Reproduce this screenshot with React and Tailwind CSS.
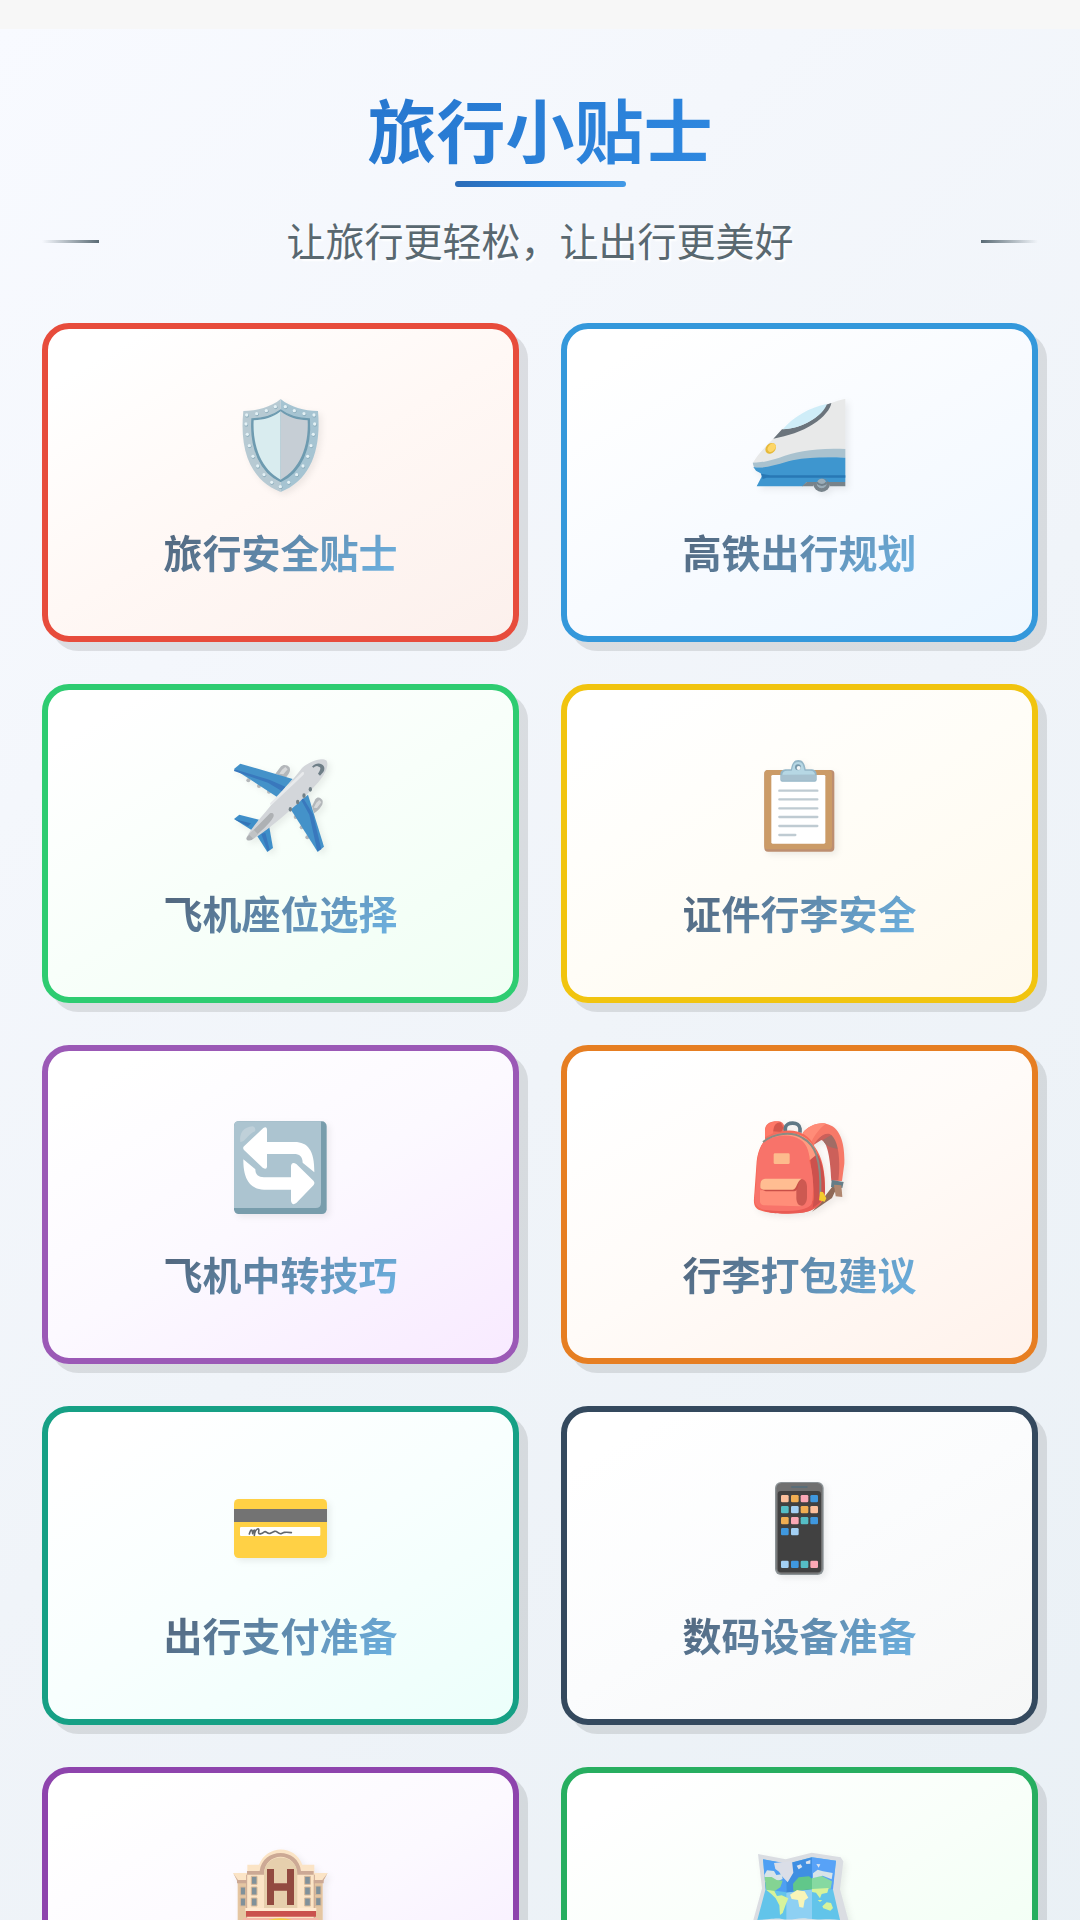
const SANS = 'font-["Noto_Sans_CJK_SC","Noto_Sans",sans-serif]';

function Icon({ box, children }) {
  return (
    <svg
      viewBox={box}
      aria-hidden="true"
      className="h-[130px] w-[120px] overflow-visible [filter:drop-shadow(3px_3px_3px_rgba(0,0,0,0.07))]"
    >
      {children}
    </svg>
  );
}

const RIVETS = [
  [80, 105], [110, 101], [139, 92], [166, 80], [196, 80], [223, 92], [252, 101], [282, 105],
  [78, 132], [82, 163], [88, 197], [99, 229], [113, 258], [132, 284], [155, 307], [181, 320],
  [206, 307], [230, 284], [249, 258], [263, 229], [273, 197], [280, 163], [284, 132],
];

function ShieldIcon() {
  return (
    <Icon box="3 0 360 390">
      <path d="M182 57C152 82 112 92 70 93C58 210 90 300 182 336Z" fill="#b7cad3" />
      <path d="M182 57C212 82 252 92 294 93C304 210 272 300 182 336Z" fill="#a6c4d2" />
      <path d="M182 90C158 108 130 116 96 117C90 205 122 278 182 304C242 278 274 205 268 117C234 116 206 108 182 90Z" fill="#6e9bb0" stroke="#6e9bb0" strokeWidth="4" />
      <path d="M182 94C158 113 132 120 101 121C97 200 126 270 182 299Z" fill="#d9ecef" />
      <path d="M182 94C206 113 232 120 263 121C267 200 238 270 182 299Z" fill="#c6ced5" />
      {RIVETS.map(([x, y]) => (
        <g key={x + "-" + y}>
          <circle cx={x + 1} cy={y + 2} r="5.5" fill="#87a9b8" />
          <circle cx={x} cy={y} r="5" fill="#e4f1f5" />
        </g>
      ))}
    </Icon>
  );
}

function TrainIcon() {
  return (
    <Icon box="32 0 360 390">
      <circle cx="277" cy="311" r="25" fill="#77838b" />
      <circle cx="277" cy="310" r="15" fill="#9badb8" />
      <path d="M348 56C290 70 210 105 160 150C128 180 95 210 72 246C68 258 80 272 98 278L348 292Z" fill="#e8e9e9" />
      <path d="M348 207C260 203 200 214 150 233C116 244 90 248 70 248L74 262C90 266 130 262 160 252C210 237 270 230 348 233Z" fill="#a9c2cf" />
      <path d="M72 261C112 268 150 250 190 241C240 231 290 231 348 233V306H232L220 319H82L96 292C102 280 88 277 80 272Z" fill="#3e96cf" />
      <path d="M95 281L122 286H348V293H112L100 297Z" fill="#2878b5" />
      <path d="M232 306H258C270 292 287 292 298 306H348V319H302C298 305 288 296 277 296C264 296 255 307 252 319H218Z" fill="#77838b" />
      <circle cx="277" cy="310" r="14" fill="#9badb8" />
      <path d="M262 307C272 318 284 318 292 307" fill="none" stroke="#70818c" strokeWidth="6" />
      <path d="M306 69C304 86 284 112 252 132C216 155 176 168 132 176L158 148C220 145 274 111 290 74Z" fill="#6b747c" />
      <path d="M293 72C240 82 190 112 160 148C220 145 280 108 293 72Z" fill="#cfedf8" />
      <ellipse cx="124" cy="205" rx="18" ry="14" transform="rotate(-48 124 205)" fill="#e6b93a" />
      <ellipse cx="127" cy="203" rx="14" ry="10" transform="rotate(-48 127 203)" fill="#fdd667" />
    </Icon>
  );
}

function PlaneIcon() {
  return (
    <Icon box="3 3 360 390">
      <g fill="#b3b7ba">
        <path d="M166 101L182 80C190 72 202 74 208 82C214 92 206 104 196 114Z" />
        <path d="M276 199L286 178C292 168 304 172 308 182C310 196 298 208 282 220Z" />
        <circle cx="85" cy="121" r="6" /><circle cx="117" cy="138" r="6" /><circle cx="147" cy="155" r="6" />
        <circle cx="227" cy="231" r="6" /><circle cx="245" cy="262" r="6" /><circle cx="262" cy="292" r="6" />
      </g>
      <path d="M186 89L196 81L203 88L190 103L178 101ZM289 188L298 180L304 187L291 204L281 203Z" fill="#d7d9da" />
      <path d="M42 87L61 71L218 117L170 170Z" fill="#4492c9" />
      <path d="M43 88L148 119L196 140L185 153L144 128L42 93Z" fill="#3978bd" />
      <path d="M212 208L264 164L312 320L293 336Z" fill="#4492c9" />
      <path d="M233 190L244 181L268 224L292 334L304 328L279 223L249 173Z" fill="#3978bd" />
      <path d="M42 237L58 224L117 239L98 272Z" fill="#3f8fc9" />
      <path d="M111 287L148 262L159 324L142 336Z" fill="#3f8fc9" />
      <path d="M43 238L93 250L84 259Z" fill="#3474b7" />
      <path d="M124 282L136 278L149 329L143 334Z" fill="#3978bd" />
      <path d="M81 291C95 258 170 180 246 84C270 64 303 51 320 62C328 78 313 107 295 127C230 200 137 276 95 300C84 303 76 298 81 291Z" fill="#d3d6da" />
      <path d="M153 187L246 97C253 94 254 100 250 105L157 193C149 196 147 193 153 187Z" fill="#e8eaec" />
      <path d="M81 291L103 268L150 220C158 216 164 223 160 231C149 252 119 276 95 300C82 304 76 299 81 291Z" fill="#aeb1b4" />
      <path d="M101 269L114 283L100 296L86 283Z" fill="#c0c3c5" />
      <path d="M276 80C294 59 323 75 310 96L300 107L294 101C302 88 304 82 296 80C290 76 285 80 281 83Z" fill="#6e7e87" />
      <g fill="#718087"><ellipse cx="211" cy="208" rx="5" ry="7" /><ellipse cx="233" cy="186" rx="5" ry="7" /><ellipse cx="252" cy="167" rx="5" ry="7" /><ellipse cx="271" cy="148" rx="5" ry="7" /></g>
    </Icon>
  );
}

function ClipboardIcon() {
  return (
    <Icon box="2 3 360 390">
      <rect x="75" y="90" width="210" height="245" rx="11" fill="#bd8e70" />
      <rect x="75" y="90" width="203" height="238" rx="11" fill="#cb9b67" />
      <rect x="96" y="105" width="162" height="206" rx="4" fill="#fff" />
      <path d="M123 103C123 94 129 89 138 88H155C158 70 164 60 177 60C190 60 196 70 199 88H218C227 89 232 95 232 103V119Q232 125 226 125H129Q123 125 123 119Z" fill="#94b6c7" />
      <path d="M129 105C129 96 134 92 144 92H157C162 80 160 66 177 66C193 66 191 80 196 92H213C222 92 227 97 227 104Z" fill="#b6d7e4" />
      <rect x="125" y="104" width="105" height="18" rx="4" fill="#a7c1cf" />
      <circle cx="176" cy="82" r="9" fill="#7798aa" />
      <circle cx="178" cy="84" r="6" fill="#f4f7f8" />
      <path d="M120 152H234M120 178H234M120 205H234M120 231H234M120 258H234M120 285H168" stroke="#bfcbd2" strokeWidth="7" strokeLinecap="round" />
    </Icon>
  );
}

function TransferIcon() {
  return (
    <Icon box="3 6 360 390">
      <rect x="42" y="64" width="278" height="278" rx="14" fill="#789dac" />
      <path d="M55 64H303V308Q303 324 287 324H42V77Q42 64 55 64Z" fill="#acc4d0" />
      <path d="M61 126C57 98 72 81 98 79Q109 83 105 94C82 103 76 127 61 126Z" fill="#bfd0d9" />
      <path d="M72 139L130 84Q141 78 141 91V126H224C263 126 284 151 283 217L248 188C248 169 238 162 222 162H141V200Q140 211 128 203L72 150Q67 144 72 139Z" fill="#fff" />
      <path d="M70 178L106 208C106 224 115 232 132 232H213V198Q215 184 229 192L281 243Q286 249 281 255L229 309Q216 318 213 303V269H132C91 269 69 237 70 178Z" fill="#fff" />
    </Icon>
  );
}

function BackpackIcon() {
  return (
    <Icon box="2 6 360 390">
      <path d="M77 119V88C79 65 104 61 124 65C137 70 138 88 130 95Z" fill="#ef7060" />
      <path d="M101 94C98 73 110 67 124 67L132 83L126 96Z" fill="#d6574c" />
      <path d="M77 91C80 66 111 62 124 66C105 69 103 80 101 100L77 112Z" fill="#ff7867" />
      <path d="M138 95V84C140 64 181 64 182 86V98" fill="none" stroke="#607986" strokeWidth="11" />
      <path d="M219 137C238 105 266 90 282 96C302 122 306 190 303 242L276 242C274 178 264 123 246 120Z" fill="#cc605a" />
      <path d="M250 120C260 115 276 104 285 103C296 116 301 133 300 148C281 142 263 145 250 120Z" fill="#a16c65" />
      <path d="M190 99C206 78 235 66 260 71C305 80 317 134 315 191L308 243H297C306 159 292 112 271 102C249 97 232 120 219 141L191 111Z" fill="#f77968" />
      <path d="M190 99C206 78 235 66 260 71C238 86 221 112 212 135Z" fill="#ff8c78" />
      <path d="M236 316L281 257L291 266L278 294L218 335Z" fill="#8f6957" />
      <path d="M277 240L313 246L309 264L275 261Z" fill="#657d87" />
      <path d="M284 254L306 256L309 291L289 289Z" fill="#b0866f" />
      <path d="M44 296L52 184C58 135 79 106 122 95C165 84 207 98 226 140C244 165 258 199 257 270C260 308 226 336 181 339C135 342 87 341 62 331C49 326 42 315 44 296Z" fill="#f66857" />
      <path d="M45 291L59 294C96 344 168 335 220 303L247 278C254 313 225 335 181 339C134 343 45 348 45 291Z" fill="#e95b54" />
      <path d="M210 157L233 161C244 175 257 213 257 270C257 293 246 308 220 323C229 280 218 229 210 157Z" fill="#cc514d" />
      <path d="M54 183C58 151 69 123 91 109C126 91 177 94 201 123C210 138 210 158 209 180C224 225 224 277 217 312C203 337 122 336 71 329C47 321 42 303 47 280C53 254 50 220 54 183Z" fill="#f8736a" />
      <path d="M70 126C107 95 161 91 194 111C213 122 230 145 233 163L211 181C210 150 199 128 183 119C150 99 107 104 70 126Z" fill="#ff9b80" />
      <path d="M71 126C104 99 159 93 190 114C226 133 246 173 243 284" fill="none" stroke="#8a8b83" strokeWidth="6" />
      <rect x="103" y="160" width="48" height="32" rx="4" fill="#fdbb8d" />
      <path d="M62 271H178C209 272 207 315 183 319L72 316Q62 313 62 304Z" fill="#ff8e79" />
      <path d="M171 265C171 231 201 229 203 260V291C203 324 172 327 171 295Z" fill="#cd5951" />
      <path d="M66 268Q59 256 66 243Q70 237 84 237H188C175 242 178 273 165 274H79Z" fill="#c95048" />
      <path d="M63 263C61 239 70 236 82 236H187C172 243 173 268 160 269H74Q67 270 63 263Z" fill="#ffbd92" />
      <path d="M242 275L251 276L261 295L256 305L239 301Z" fill="#f3cb2f" />
    </Icon>
  );
}

function CardIcon() {
  return (
    <Icon box="3 -21 360 390">
      <rect x="42" y="87" width="279" height="177" rx="14" fill="#ffd145" />
      <path d="M42 117H321V156H42Z" fill="#737373" />
      <rect x="60" y="171" width="241" height="27" rx="3" fill="#fff" />
      <path d="M88 192C92 177 97 176 98 191C102 176 106 177 103 196C105 175 120 171 116 185C114 196 125 192 134 185C140 183 142 195 153 189L164 184C172 182 174 193 183 191L193 187Q203 186 214 188" fill="none" stroke="#61666c" strokeWidth="5" strokeLinecap="round" strokeLinejoin="round" />
    </Icon>
  );
}

const APPS = [
  [123, 90, "#fcc09d"], [153, 90, "#f1ae52"], [182, 90, "#fba8b5"], [211, 90, "#3f98df"],
  [123, 123, "#55bdc5"], [153, 123, "#a3d0f4"], [182, 123, "#f1ae52"], [211, 123, "#fcc09d"],
  [123, 156, "#f1ae52"], [153, 156, "#fba8b5"], [182, 156, "#55bdc5"], [211, 156, "#3f98df"],
  [123, 189, "#3f98df"], [153, 189, "#a3d0f4"],
  [123, 287, "#a3d0f4"], [153, 287, "#3f98df"], [182, 287, "#55bdc5"], [211, 287, "#fba8b5"],
];

function PhoneIcon() {
  return (
    <Icon box="0 -6 360 390">
      <rect x="105" y="51" width="146" height="279" rx="18" fill="#8b9295" />
      <rect x="109" y="54" width="138" height="272" rx="16" fill="#707070" />
      <rect x="113" y="78" width="130" height="244" rx="10" fill="#414141" />
      <rect x="153" y="63" width="50" height="6" rx="3" fill="#596d78" />
      {APPS.map(([x, y, fill]) => (
        <rect key={x + "-" + y} x={x} y={y} width="23" height="22" rx="4" fill={fill} />
      ))}
    </Icon>
  );
}

function HotelIcon() {
  return (
    <Icon box="3 12 360 390">
      <path d="M39 159L54 181V344H307V181L323 159H283V134H247C225 73 141 73 117 134H82V159Z" fill="#fbe4c6" />
      <path d="M40 159L53 181V344H80V189H54ZM323 159L308 181V344H281V189H307Z" fill="#e5c6a2" />
      <path d="M39 159L54 180H80V190H51V179ZM323 159L307 180H281V190H311V179ZM81 153H119C128 81 235 81 243 153H281V164H231C231 92 133 92 132 164H81Z" fill="#cca995" />
      <path d="M132 264V160C134 97 230 97 232 160V264Z" fill="#e6cfad" />
      <path d="M80 164V344M283 164V344" stroke="#cca995" strokeWidth="3" />
      <path d="M141 147H162V190H201V147H222V255H201V212H162V255H141Z" fill="#924a40" />
      <g fill="#80919a" stroke="#d9b999" strokeWidth="3">
        <path d="M94 169H111V193H94ZM94 201H111V225H94ZM94 234H111V258H94ZM254 169H271V193H254ZM254 201H271V225H254ZM254 234H271V258H254ZM61 201H77V225H61ZM61 234H77V258H61ZM287 198H303V224H287ZM287 233H303V257H287Z" />
      </g>
      <path d="M76 264H289V273H76Z" fill="#ffe9d0" />
      <path d="M78 273H288V290H78Z" fill="#ca514d" />
      <path d="M70 294H295V344H70Z" fill="#f5b8a9" />
      <path d="M145 300Q181 290 217 300Z" fill="#f5cf43" />
    </Icon>
  );
}

function MapIcon() {
  return (
    <Icon box="0 12 360 390">
      <path d="M54 102L137 118L215 98L302 112L310 124L300 208L326 304V350H40V300L66 205Z" fill="#dadde2" />
      <path d="M69 118L141 132L215 112L288 122L278 205L300 300V340H52V300L77 206Z" fill="#62c4ea" />
      <path d="M69 118L137 130L139 217L77 208Z" fill="#4e9ff3" />
      <path d="M138 132L216 112V208L139 218Z" fill="#3f8fe2" />
      <path d="M216 112L288 122L279 208L216 207Z" fill="#58a2f7" />
      <path d="M139 218L216 208V340H139Z" fill="#8ed0f3" />
      <path d="M102 129L156 123L160 158L143 187L126 169L117 155L106 147Z" fill="#dadee7" />
      <path d="M73 165L81 151L102 153L109 165L125 163L128 177L112 184L75 186Z" fill="#d7e4e8" />
      <path d="M74 171L95 171L110 180L128 182L121 202L94 220L78 207Z" fill="#84d493" />
      <path d="M160 213L159 191L176 172L207 169L216 176V208Z" fill="#61c78a" />
      <path d="M216 174L244 167L276 184L272 206L216 209Z" fill="#86d9a1" />
      <path d="M219 174V160L233 149L249 154L278 159L275 178L248 167Z" fill="#d8e4e8" />
      <path d="M170 137L182 133L187 141L176 148ZM197 125L211 120V131L199 132ZM229 132L241 133L236 143Z" fill="#dbe4ee" />
      <path d="M78 209L103 213L111 228L125 226L145 235L137 254L128 279L120 285L118 256L107 235L94 222Z" fill="#d7f39b" />
      <path d="M150 224L171 210L194 214L205 233L194 241L190 263L178 261L174 240L155 237Z" fill="#f8f5b8" />
      <path d="M216 207L266 204L262 218L245 222L240 235L228 218L216 216ZM247 259L260 247L273 249L279 264L271 272L250 265ZM233 240L247 240L240 246Z" fill="#d7f39b" />
      <path d="M52 300C95 298 107 293 126 297C157 303 176 290 204 296C244 301 270 295 299 300V307H52Z" fill="#d9e3e9" />
    </Icon>
  );
}

const CARDS = [
  { title: "旅行安全贴士", Art: ShieldIcon, tone: "border-[#e74c3c] from-white via-[#fff8f5] to-[#fcf0ec]" },
  { title: "高铁出行规划", Art: TrainIcon, tone: "border-[#3498db] from-white via-[#f8fbff] to-[#eff7ff]" },
  { title: "飞机座位选择", Art: PlaneIcon, tone: "border-[#2ecc71] from-white via-[#f8fffa] to-[#f0fff4]" },
  { title: "证件行李安全", Art: ClipboardIcon, tone: "border-[#f1c40f] from-white via-[#fffdf7] to-[#fff9ec]" },
  { title: "飞机中转技巧", Art: TransferIcon, tone: "border-[#9b59b6] from-white via-[#fcf9ff] to-[#f8eaff]" },
  { title: "行李打包建议", Art: BackpackIcon, tone: "border-[#e67e22] from-white via-[#fffbf8] to-[#fff2eb]" },
  { title: "出行支付准备", Art: CardIcon, tone: "border-[#16a085] from-white via-[#f8fffe] to-[#ecfffb]" },
  { title: "数码设备准备", Art: PhoneIcon, tone: "border-[#34495e] from-white via-[#fbfcfd] to-[#f6f7f7]" },
  { Art: HotelIcon, tone: "border-[#8e44ad] from-white via-[#fcf9ff] to-[#f5e9ff]" },
  { Art: MapIcon, tone: "border-[#27ae60] from-white via-[#f8fff9] to-[#edfff1]" },
];

function TipCard({ title, Art, tone }) {
  return (
    <a
      href="#"
      className={
        "flex min-h-[319px] flex-col items-center rounded-[27px] border-6 bg-linear-150 from-10% pt-[51px] shadow-[9px_9px_0_rgba(0,0,0,0.1)] " + tone
      }
    >
      <Art />
      {title && (
        <h2 className="mt-[17px] bg-linear-135 from-[#51647a] to-[#6db3e3] bg-clip-text text-[39px] leading-12 font-bold text-transparent">
          {title}
        </h2>
      )}
    </a>
  );
}

export default function App() {
  return (
    <div className={"flex h-screen flex-col overflow-y-auto bg-[#f7f7f7] pt-[29px] [scrollbar-width:none] " + SANS}>
      <main className="shrink-0 bg-linear-135 from-[#f8faff] via-[#f0f4f9] to-[#e9f0f5] px-[42px] pb-[42px]">
        <header className="flex flex-col items-center pt-[57px]">
          <h1 className="bg-linear-135 from-[#2676ce] to-[#2e88e0] bg-clip-text text-[69px] leading-[84px] font-bold text-transparent">
            旅行小贴士
          </h1>
          <div className="mt-[11px] h-1.5 w-[171px] rounded-full bg-linear-to-r from-[#2b6cb8] via-[#2b84dc] to-[#4299e6]" />
          <div className="mt-[27px] flex w-full items-center justify-between">
            <span className="h-[3px] w-[57px] bg-linear-to-r from-transparent to-[#5a6b75]" />
            <p className="pb-1 text-[39px] leading-[50px] text-[#596870] [text-shadow:2px_2px_2px_#ffffff]">
              让旅行更轻松，让出行更美好
            </p>
            <span className="h-[3px] w-[57px] bg-linear-to-r from-[#5a6b75] to-transparent" />
          </div>
        </header>
        <nav aria-label="旅行小贴士" className="mt-[55px] grid grid-cols-2 gap-[42px]">
          {CARDS.map((card, i) => (
            <TipCard key={i} {...card} />
          ))}
        </nav>
      </main>
    </div>
  );
}
